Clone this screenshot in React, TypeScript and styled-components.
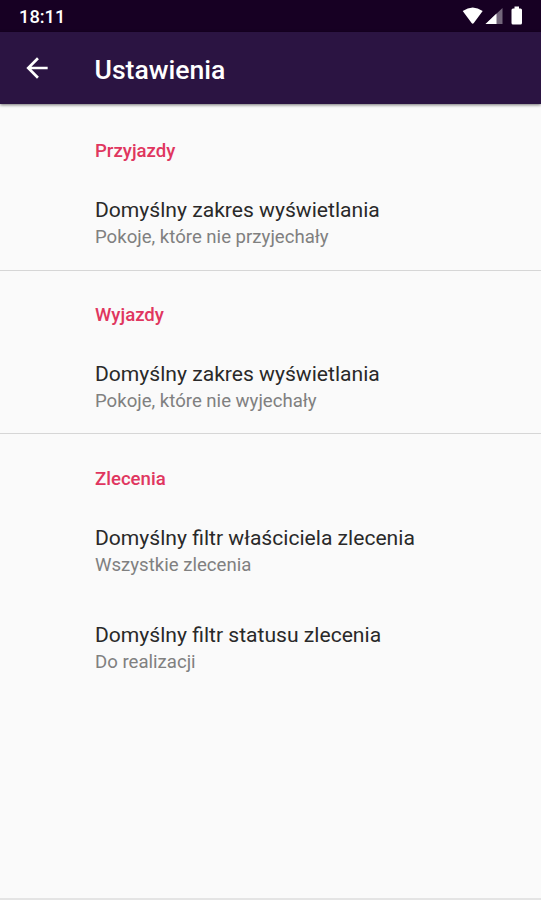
import React from "react";
import styled, { createGlobalStyle } from "styled-components";

const Global = createGlobalStyle`
  * { box-sizing: border-box; }
  body { margin: 0; background: #fafafa; }
`;

const Screen = styled.div`
  width: 541px;
  height: 900px;
  display: flex;
  flex-direction: column;
  overflow: hidden;
  background: #fafafa;
  border-bottom: 2px solid #e4e4e4;
  font-family: Roboto, sans-serif;
`;

const StatusBar = styled.header`
  height: 32px;
  flex: none;
  display: flex;
  align-items: center;
  justify-content: space-between;
  padding: 0 17px 0 19px;
  background: #170023;
  color: #fff;
`;

const Clock = styled.span`
  padding-top: 1px;
  font-size: 18.3px;
  font-weight: 500;
  line-height: 31px;
`;

const StatusIcons = styled.svg`
  display: block;
  width: 62px;
  height: 32px;
`;

const AppBar = styled.div`
  height: 72px;
  flex: none;
  display: flex;
  align-items: center;
  padding-left: 20px;
  background: #2b1442;
  color: #fff;
  box-shadow: 0 1px 3px rgba(0, 0, 0, 0.55);
`;

const BackButton = styled.button`
  width: 74.5px;
  height: 32px;
  padding: 0 0 0 1px;
  border: 0;
  background: none;
  color: inherit;
`;

const BackIcon = styled.svg`
  display: block;
  width: 32px;
  height: 32px;
`;

const Title = styled.h1`
  margin: 0;
  padding-top: 3px;
  font-size: 26.6px;
  font-weight: 500;
  line-height: 36px;
`;

const Content = styled.main`
  padding-top: 1px;
`;

const Section = styled.section`
  height: 164px;
  padding: 32px 0 0 95px;
  border-bottom: 1px solid #d6d6d6;
  &:first-child { height: 166px; padding-top: 34px; }
  &:nth-child(2) { height: 163px; padding-top: 32px; }
  &:last-child { height: auto; padding-top: 33px; border-bottom: 0; }
`;

const SectionTitle = styled.h2`
  margin: 0 0 33px;
  height: 24px;
  font-size: 18.6px;
  font-weight: 500;
  line-height: 24px;
  color: #e0365f;
`;

const Preference = styled.div`
  height: 96.5px;
`;

const Label = styled.div`
  height: 28px;
  font-size: 21.1px;
  line-height: 28px;
  white-space: nowrap;
  color: #292929;
`;

const Summary = styled.div`
  height: 26px;
  font-size: 18.6px;
  line-height: 26px;
  white-space: nowrap;
  color: #808080;
`;

const sections = [
  { title: "Przyjazdy", items: [{ label: "Domyślny zakres wyświetlania", value: "Pokoje, które nie przyjechały" }] },
  { title: "Wyjazdy", items: [{ label: "Domyślny zakres wyświetlania", value: "Pokoje, które nie wyjechały" }] },
  {
    title: "Zlecenia",
    items: [
      { label: "Domyślny filtr właściciela zlecenia", value: "Wszystkie zlecenia" },
      { label: "Domyślny filtr statusu zlecenia", value: "Do realizacji" },
    ],
  },
];

export default function App() {
  return (
    <>
      <Global />
      <Screen>
        <StatusBar>
          <Clock>18:11</Clock>
          <StatusIcons viewBox="0 0 62 32" fill="currentColor">
            <path d="M.7 11Q10.700 4 20.700 11L11.800 23Q10.700 24.500 9.600 23Z" />
            <path d="M40.500 8V24H23.500Z" opacity=".4" />
            <path d="M34.500 13.600V24H23.500Z" />
            <path d="M49.500 10Q49.500 8.500 51 8.500H52.500V6.500H57V8.500H58.500Q60 8.500 60 10V23Q60 24.500 58.500 24.500H51Q49.500 24.500 49.500 23Z" />
          </StatusIcons>
        </StatusBar>
        <AppBar>
          <BackButton aria-label="Wstecz">
            <BackIcon viewBox="0 0 24 24" fill="currentColor">
              <path d="M20 11H7.830l5.590-5.590L12 4l-8 8 8 8 1.410-1.410L7.830 13H20v-2z" />
            </BackIcon>
          </BackButton>
          <Title>Ustawienia</Title>
        </AppBar>
        <Content>
          {sections.map((s) => (
            <Section key={s.title}>
              <SectionTitle>{s.title}</SectionTitle>
              {s.items.map((i) => (
                <Preference key={i.label}>
                  <Label>{i.label}</Label>
                  <Summary>{i.value}</Summary>
                </Preference>
              ))}
            </Section>
          ))}
        </Content>
      </Screen>
    </>
  );
}
